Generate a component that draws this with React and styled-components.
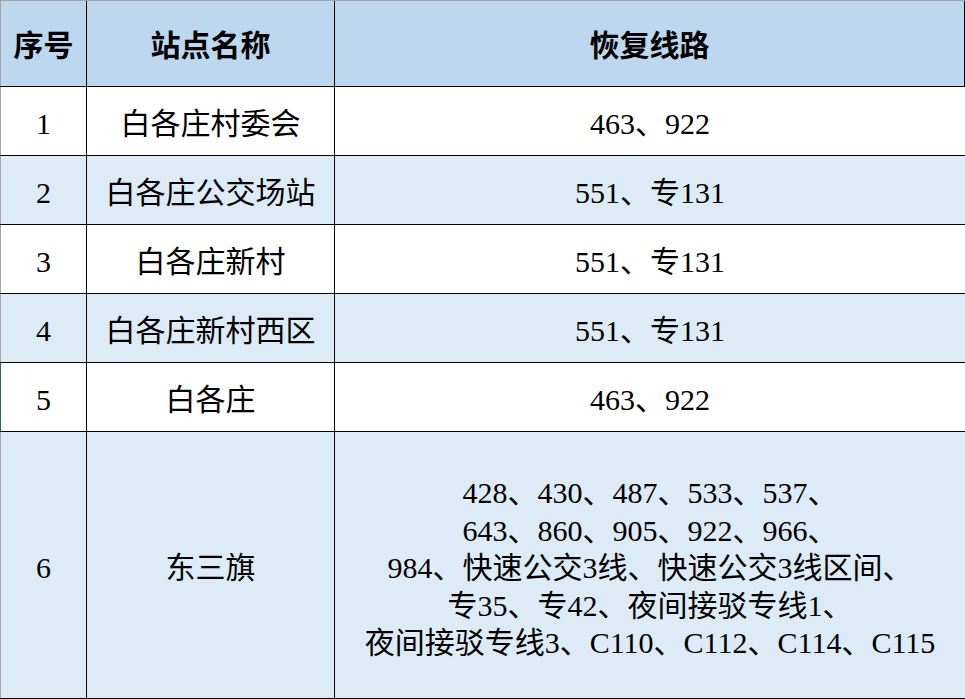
import React from "react";
import styled, { createGlobalStyle } from "styled-components";

const Global = createGlobalStyle`
  html, body {
    margin: 0;
    padding: 0;
    background: #ffffff;
    overflow: hidden;
  }
`;

const Sheet = styled.div`
  width: 965px;
  height: 699px;
  box-sizing: border-box;
  border-top: 1px solid #a5a5a5;
  font-family: "Liberation Serif", "Noto Sans CJK SC", serif;
  color: #000;
`;

const Grid = styled.div`
  display: grid;
  grid-template-columns: 86px 247px 1fr;
  grid-template-rows: 85px repeat(5, 68px) 266px;
  gap: 1px;
  background: #000;
  border-bottom: 1px solid #000;
`;

const Cell = styled.div`
  display: flex;
  align-items: center;
  justify-content: center;
  text-align: center;
  box-sizing: border-box;
  padding-top: 5px;
  background: ${(p) => (p.$head ? "#bdd7ee" : p.$alt ? "#ddebf7" : "#ffffff")};
  font-size: 30px;
  font-weight: ${(p) => (p.$head ? 700 : 400)};
  line-height: 37.5px;
  white-space: nowrap;
  border-left: ${(p) => (p.$first ? `1px solid ${p.$mark ? "#217346" : "#a5a5a5"}` : "none")};
  border-right: ${(p) => (p.$last ? "1px solid #000" : "none")};
`;

const Lines = styled.div`
  display: flex;
  flex-direction: column;
  align-items: center;
  padding-top: 1px;
`;

const rows = [
  { no: "1", name: "白各庄村委会", lines: ["463、922"] },
  { no: "2", name: "白各庄公交场站", lines: ["551、专131"] },
  { no: "3", name: "白各庄新村", lines: ["551、专131"] },
  { no: "4", name: "白各庄新村西区", lines: ["551、专131"] },
  { no: "5", name: "白各庄", lines: ["463、922"], mark: true },
  {
    no: "6",
    name: "东三旗",
    lines: [
      "428、430、487、533、537、",
      "643、860、905、922、966、",
      "984、快速公交3线、快速公交3线区间、",
      "专35、专42、夜间接驳专线1、",
      "夜间接驳专线3、C110、C112、C114、C115",
    ],
  },
];

export default function App() {
  return (
    <>
      <Global />
      <Sheet>
        <Grid>
          <Cell $head $first>序号</Cell>
          <Cell $head>站点名称</Cell>
          <Cell $head $last>恢复线路</Cell>
          {rows.map((r, i) => {
            const alt = i % 2 === 1;
            return (
              <React.Fragment key={r.no}>
                <Cell $alt={alt} $first $mark={r.mark}>{r.no}</Cell>
                <Cell $alt={alt}>{r.name}</Cell>
                <Cell $alt={alt}>
                  {r.lines.length > 1 ? (
                    <Lines>
                      {r.lines.map((l) => (
                        <span key={l}>{l}</span>
                      ))}
                    </Lines>
                  ) : (
                    r.lines[0]
                  )}
                </Cell>
              </React.Fragment>
            );
          })}
        </Grid>
      </Sheet>
    </>
  );
}
